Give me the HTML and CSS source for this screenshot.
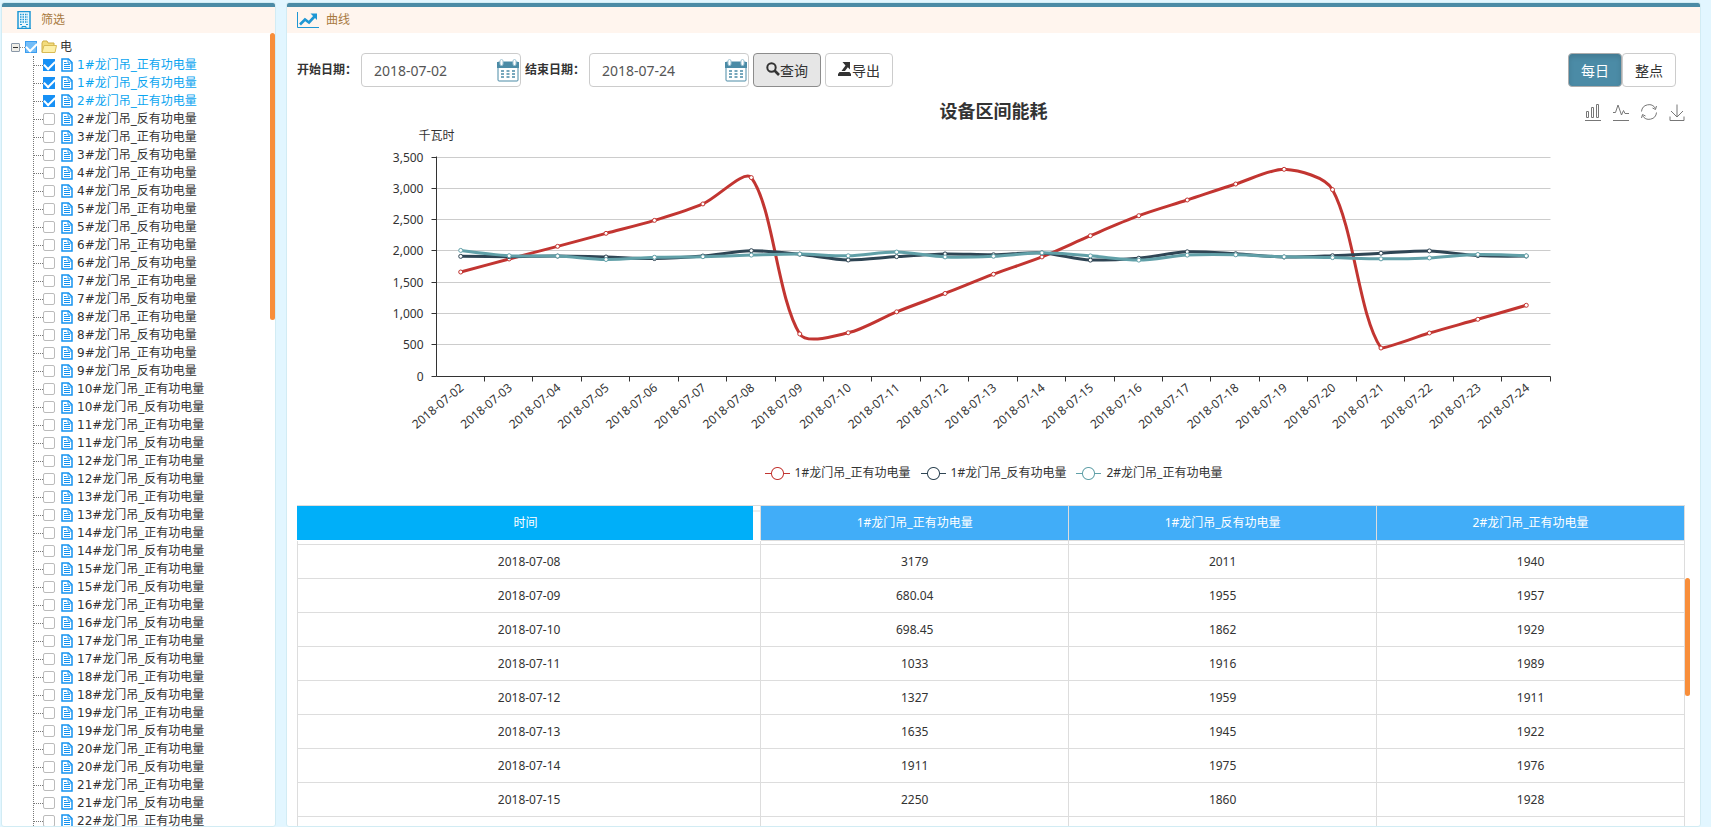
FILE: index.html
```html
<!DOCTYPE html>
<html lang="zh-CN">
<head>
<meta charset="utf-8">
<title>设备区间能耗</title>
<link rel="stylesheet" href="styles.css">
</head>
<body>
<svg class="defs" aria-hidden="true">
  <symbol id="i-doc" viewBox="0 0 12 14"><path d="M1 1h6.500l3.500 3.500V13H1z" fill="#fff" stroke="#1593f0" stroke-width="1.500"/><path d="M7 1v4h4M3 6.500h6M3 8.500h6M3 10.500h6M3 4.500h2.500" fill="none" stroke="#1593f0"/></symbol>
  <symbol id="i-cal" viewBox="0 0 22 23"><rect x="1" y="3" width="20" height="19" rx="1" fill="#fff" stroke="#4b8ba6"/><path d="M0 3h22v6H0z" fill="#4b8ba6"/><rect x="3" y="0.500" width="3" height="6" rx="1.500" fill="#fff" stroke="#9ec3d3"/><rect x="16" y="0.500" width="3" height="6" rx="1.500" fill="#fff" stroke="#9ec3d3"/><path d="M4 12h14M4 15h14M4 18h14" stroke="#4b8ba6" stroke-width="1.500" stroke-dasharray="3 2.500" fill="none"/></symbol>
</svg>

<aside class="panel sidebar">
  <header class="panel-head">
    <svg class="building" viewBox="0 0 14 18"><path d="M1 .5h12v17H1z" fill="#eef8fd" stroke="#1f97d4" stroke-width="1.500"/><path d="M3 3.500h8M3 6h8M3 8.500h8M3 11h8" stroke="#1f97d4" stroke-width="1.400" stroke-dasharray="1.500 1"/><path d="M3 13.500h2M9 13.500h2M0 17.500h5v-2h4v2h5" stroke="#1f97d4" fill="none"/></svg>
    <h2>筛选</h2>
  </header>
  <div class="tree">
    <div class="root">
      <button class="switch" aria-label="折叠"></button><i class="dots"></i>
      <input type="checkbox" id="root" class="partial" checked>
      <svg class="folder" viewBox="0 0 16 14"><path d="M1 12V3l1-2h4l1 2h6v3" fill="#f3dc7c" stroke="#cfae45"/><path d="M1 12.500L3 5.500h12.500L14 12.500z" fill="#fdf0a8" stroke="#d9bb55"/></svg>
      <label for="root">电</label>
    </div>
    <ul class="leaves" id="leaves"></ul>
  </div>
  <i class="thumb side-thumb"></i>
</aside>

<main class="panel content">
  <header class="panel-head">
    <svg class="trend" viewBox="0 0 22 16"><path d="M.5 0v15.500H22" fill="none" stroke="#1f97d4"/><path d="M3 12.500l5-5 4 3 5.500-6" fill="none" stroke="#1f97d4" stroke-width="2.600"/><path d="M13.500 1.500H20V8z" fill="#1f97d4"/></svg>
    <h2>曲线</h2>
  </header>
  <div class="body">
    <form class="toolbar">
      <label for="from">开始日期：</label>
      <span class="date"><input type="text" id="from" value="2018-07-02"><svg><use href="#i-cal"/></svg></span>
      <label for="to">结束日期：</label>
      <span class="date"><input type="text" id="to" value="2018-07-24"><svg><use href="#i-cal"/></svg></span>
      <button type="button" class="btn pressed"><svg viewBox="0 0 14 14"><circle cx="5.500" cy="5.500" r="4.200" fill="none" stroke="#333" stroke-width="2"/><path d="M8.500 8.500l4.500 4.500" stroke="#333" stroke-width="2.600"/></svg>查询</button>
      <button type="button" class="btn"><svg viewBox="0 0 14 14"><path d="M0 14v-2l1.500-2h10l1.500 2v2z" fill="#333"/><path d="M4.500 0H12v7.500L9.800 5.300 7 9H3.500l4-5.500z" fill="#333"/></svg>导出</button>
      <span class="group"><button type="button" class="btn on">每日</button><button type="button" class="btn">整点</button></span>
    </form>

    <section class="chart">
      <h1>设备区间能耗</h1>
      <div class="tools">
        <button aria-label="柱状图"><svg viewBox="0 0 16 18"><path d="M1.500 8.500h2v6h-2zM6.500 4.500h2v10h-2zM11.500 1.500h2v13h-2zM0 17.500h16"/></svg></button>
        <button aria-label="折线图"><svg viewBox="0 0 16 18"><path d="M0 9.500h2.500L5 2l3.500 10 2-4.500 1.500 3h4M0 17.500h16"/></svg></button>
        <button aria-label="还原"><svg viewBox="0 0 16 18"><path d="M.5 8.500a7.500 7.500 0 0 1 14-3M15.500 9.500a7.500 7.500 0 0 1-14 3M15.500 3l-1 3.500-3-1.500M.5 15l1-3.500 3 1.500"/></svg></button>
        <button aria-label="保存为图片"><svg viewBox="0 0 16 18"><path d="M8 1.500V14M2 8l6 6 6-6M1 13.500v4h14v-4"/></svg></button>
      </div>
      <svg class="plot" id="plot"></svg>
      <ul class="legend">
        <li class="s1">1#龙门吊_正有功电量</li><li class="s2">1#龙门吊_反有功电量</li><li class="s3">2#龙门吊_正有功电量</li>
      </ul>
    </section>

    <div class="grid">
      <table>
        <thead><tr><th class="time"><span>时间</span></th><th>1#龙门吊_正有功电量</th><th>1#龙门吊_反有功电量</th><th>2#龙门吊_正有功电量</th></tr></thead>
        <tbody id="rows"><tr class="sliver"><td></td><td></td><td></td><td></td></tr></tbody>
      </table>
      <i class="thumb grid-thumb"></i>
    </div>
  </div>
</main>
<script src="app.js"></script>
</body>
</html>
```
FILE: styles.css
```css
* { box-sizing: border-box; }
body {
  margin: 0;
  height: 100vh;
  padding: 2px 10px 0 1px;
  display: flex;
  gap: 10px;
  overflow: hidden;
  background: #e2f6ff;
  color: #333;
  font: 12px/18px "Noto Sans", "Noto Sans CJK SC", sans-serif;
}
h1, h2, ul { margin: 0; padding: 0; font-weight: normal; list-style: none; }
button, input { font: inherit; color: inherit; margin: 0; }
.defs { position: absolute; width: 0; height: 0; }

.panel {
  position: relative;
  height: calc(100vh - 2px);
  border: 1px solid #d2ecf4;
  border-radius: 3px;
  background: #fff;
  overflow: hidden;
}
.sidebar { flex: 0 0 275px; }
.content { flex: 1; min-width: 0; }
.panel-head {
  height: 30px;
  display: flex;
  align-items: center;
  border-top: 4px solid #4b8ba6;
  background: #fff5ee;
  color: #a87940;
}
.panel-head h2 { font-size: 12px; line-height: 18px; }
.sidebar .panel-head { padding-left: 15px; gap: 10px; }
.content .panel-head { padding-left: 10px; gap: 7px; }
.building { width: 14px; height: 18px; }
.trend { width: 22px; height: 16px; }
.thumb { position: absolute; width: 5px; border-radius: 3px; background: #f88e3a; }
.side-thumb { right: 0; top: 30px; height: 287px; }

.tree { padding: 5px 0 0 9px; font-family: "DejaVu Sans", "Noto Sans CJK SC", sans-serif; }
.root, .leaves li { display: flex; align-items: center; height: 18px; white-space: nowrap; }
.switch {
  width: 9px; height: 9px; padding: 0;
  border: 1px solid #8a98a8; border-radius: 1px;
  background: linear-gradient(#333, #333) center / 5px 1px no-repeat #f0eee8;
}
.dots { width: 5px; border-top: 1px dotted #888; }
.folder { width: 16px; height: 14px; margin: 0 3px 0 4px; }
.tree input {
  appearance: none;
  width: 12px; height: 12px;
  border: 1px solid #bbb; border-radius: 2px;
  background: #fff;
}
.tree input:checked {
  border: 0; border-radius: 0;
  background: #1790f5;
  display: grid; place-items: center;
}
.tree input:checked::before {
  content: "";
  width: 9px; height: 5px;
  border: solid #fff; border-width: 0 0 2px 2px;
  transform: rotate(-45deg) translate(1px, -1px);
}
.tree input.partial:checked { background: #74bdf7; border: 1px solid #3a9df0; }
.leaves { margin-left: 22px; border-left: 1px dotted #777; }
.leaves li::before { content: ""; width: 9px; border-top: 1px dotted #777; }
.leaves svg { width: 12px; height: 14px; margin: 0 4px 0 6px; }
.leaves .picked { color: #0ba5f0; }

.body { padding: 20px 10px 0; }
.toolbar { display: flex; align-items: center; padding-right: 14px; }
.toolbar label {
  width: 64px;
  font-family: "Noto Sans", "Noto Sans CJK TC", sans-serif;
  font-weight: bold;
  white-space: nowrap;
}
.date { position: relative; width: 160px; margin-right: 4px; }
.date input {
  width: 100%; height: 34px; padding: 6px 12px;
  border: 1px solid #ccc; border-radius: 4px;
  color: #555; font-size: 14px;
}
.date svg { position: absolute; right: 2px; top: 6px; width: 22px; height: 23px; pointer-events: none; }
.btn {
  height: 34px; padding: 2px 12px 0;
  display: inline-flex; align-items: center; justify-content: center;
  border: 1px solid #ccc; border-radius: 4px;
  background: #fff; font-size: 14px; line-height: 20px;
  white-space: nowrap;
}
.btn svg { width: 14px; height: 14px; margin-bottom: 4px; }
.toolbar > .btn { width: 68px; margin-right: 4px; padding: 2px 0 0; }
.btn.pressed { background: #e6e6e6; border-color: #8c8c8c; }
.group { display: flex; margin-left: auto; }
.group .btn { width: 54px; }
.group .on {
  border-color: #adadad; background: #4b8ba6; color: #fff;
  box-shadow: inset 0 3px 5px rgba(0, 0, 0, .125);
}

.chart { position: relative; padding-top: 11px; }
.chart h1 { text-align: center; font-size: 18px; line-height: 27px; font-weight: bold; }
.tools { position: absolute; right: 4px; top: 16px; display: flex; gap: 11px; }
.tools button { padding: 0; border: 0; background: none; width: 17px; height: 18px; }
.tools svg { display: block; width: 16px; height: 18px; fill: none; stroke: #777; }
.plot { display: block; width: 100%; height: 320px; font-size: 12px; overflow: visible; }
.plot text { fill: #333; }
.legend { display: flex; justify-content: center; gap: 10px; padding: 19px 0 23px; }
.legend li { display: flex; align-items: center; gap: 5px; }
.legend li::before {
  content: "";
  width: 25px; height: 13px;
  background:
    radial-gradient(circle, #fff 5px, var(--c) 6px, transparent 7px),
    linear-gradient(var(--c), var(--c)) center / 25px 1px no-repeat;
}
.s1 { --c: #c23531; }
.s2 { --c: #2f4554; }
.s3 { --c: #61a0a8; }

.grid { position: relative; margin-right: 5px; }
table { width: 100%; table-layout: fixed; border-collapse: collapse; text-align: center; }
th, td { height: 34px; padding: 0; border: 1px solid #ddd; }
th { height: 35px; background: #41adf8; color: #fff; font-weight: normal; }
th.time {
  width: 33.4%; padding-right: 7px;
  border-left-color: #00aff9; border-bottom-color: #fff;
  background: linear-gradient(#fff 4px, #ddd 4px, #ddd 5px, #fff 5px);
}
th.time span { display: block; line-height: 34px; background: #00aff9; }
.sliver td { height: 4px; }
.grid-thumb { right: -5px; top: 73px; height: 118px; }
```
FILE: app.js
```js
// Tree leaves
const leaves = document.getElementById('leaves');
let html = '';
for (let i = 0; i < 43; i++) {
  const n = Math.floor(i / 2) + 1, dir = i % 2 ? '反' : '正', on = i < 3;
  html += `<li${on ? ' class="picked"' : ''}><input type="checkbox" id="n${i}"${on ? ' checked' : ''}><svg><use href="#i-doc"/></svg><label for="n${i}">${n}#龙门吊_${dir}有功电量</label></li>`;
}
leaves.innerHTML = html;

// Daily readings
const dates = Array.from({ length: 23 }, (_, i) => '2018-07-' + String(i + 2).padStart(2, '0'));
const series = [
  { color: '#c23531', data: [1670, 1878, 2080, 2288, 2495, 2758, 3179, 680.04, 698.45, 1033, 1327, 1635, 1911, 2250, 2570, 2821, 3076, 3311, 2986, 455, 695, 914, 1138] },
  { color: '#2f4554', data: [1920, 1915, 1925, 1910, 1885, 1925, 2011, 1955, 1862, 1916, 1959, 1945, 1975, 1860, 1890, 1993, 1962, 1910, 1930, 1970, 2007, 1932, 1925] },
  { color: '#61a0a8', data: [2015, 1930, 1925, 1870, 1905, 1915, 1940, 1957, 1929, 1989, 1911, 1922, 1976, 1928, 1860, 1940, 1945, 1912, 1900, 1880, 1895, 1950, 1928] }
];

let rows = '';
for (let i = 6; i < 14; i++) {
  rows += `<tr><td>${dates[i]}</td>${series.map(s => `<td>${s.data[i]}</td>`).join('')}</tr>`;
}
rows += '<tr><td></td><td></td><td></td><td></td></tr>';
document.getElementById('rows').insertAdjacentHTML('beforeend', rows);

// Smoothed path whose control points stay inside the bounds of the series
const SMOOTH = 0.3;
function smoothPath(pts) {
  const xs = pts.map(p => p[0]), ys = pts.map(p => p[1]);
  const lo = [Math.min(...xs), Math.min(...ys)], hi = [Math.max(...xs), Math.max(...ys)];
  const clamp = p => p.map((v, k) => Math.min(hi[k], Math.max(lo[k], v)));
  let d = 'M' + pts[0], out = pts[0];
  for (let i = 1; i < pts.length; i++) {
    const p = pts[i], q = pts[i - 1], n = pts[i + 1];
    let into = p, next = p;
    if (n) {
      const a = Math.hypot(p[0] - q[0], p[1] - q[1]), b = Math.hypot(n[0] - p[0], n[1] - p[1]);
      const r = b / (a + b), v = [n[0] - q[0], n[1] - q[1]];
      into = clamp([p[0] - v[0] * SMOOTH * (1 - r), p[1] - v[1] * SMOOTH * (1 - r)]);
      next = clamp([p[0] + v[0] * SMOOTH * r, p[1] + v[1] * SMOOTH * r]);
    }
    d += `C${out} ${into} ${p}`;
    out = next;
  }
  return d;
}

function draw() {
  const plot = document.getElementById('plot');
  const w = plot.clientWidth, left = Math.round(w * .1) + .5, right = w - left;
  const top = 32.5, base = 251.5, step = (right - left) / dates.length;
  let s = `<text x="${left}" y="15" text-anchor="middle">千瓦时</text>`;
  for (let v = 0; v <= 3500; v += 500) {
    const y = Math.round(base - v / 3500 * (base - top)) - .5;
    if (v) s += `<path d="M${left} ${y}H${right}" stroke="#ccc"/>`;
    s += `<path d="M${left - 5} ${y}H${left}" stroke="#333"/><text x="${left - 13}" y="${y + 4}" text-anchor="end">${v.toLocaleString('en-US')}</text>`;
  }
  s += `<path d="M${left} ${top - 1}V${base}H${right}" fill="none" stroke="#333"/>`;
  dates.forEach((t, i) => {
    const x = left + step * (i + .5), tick = Math.round(left + step * (i + 1)) - .5;
    s += `<path d="M${tick} ${base}v5" stroke="#333"/><text transform="translate(${x} ${base + 8}) rotate(-40)" text-anchor="end" y="6">${t}</text>`;
  });
  series.forEach(({ color, data }) => {
    const pts = data.map((v, i) => [left + step * (i + .5), base - v / 3500 * (base - top)]);
    s += `<path d="${smoothPath(pts)}" fill="none" stroke="${color}" stroke-width="3"/>`;
    pts.forEach(p => { s += `<circle cx="${p[0]}" cy="${p[1]}" r="2" fill="#fff" stroke="${color}"/>`; });
  });
  plot.innerHTML = s;
}
draw();
addEventListener('resize', draw);
```
